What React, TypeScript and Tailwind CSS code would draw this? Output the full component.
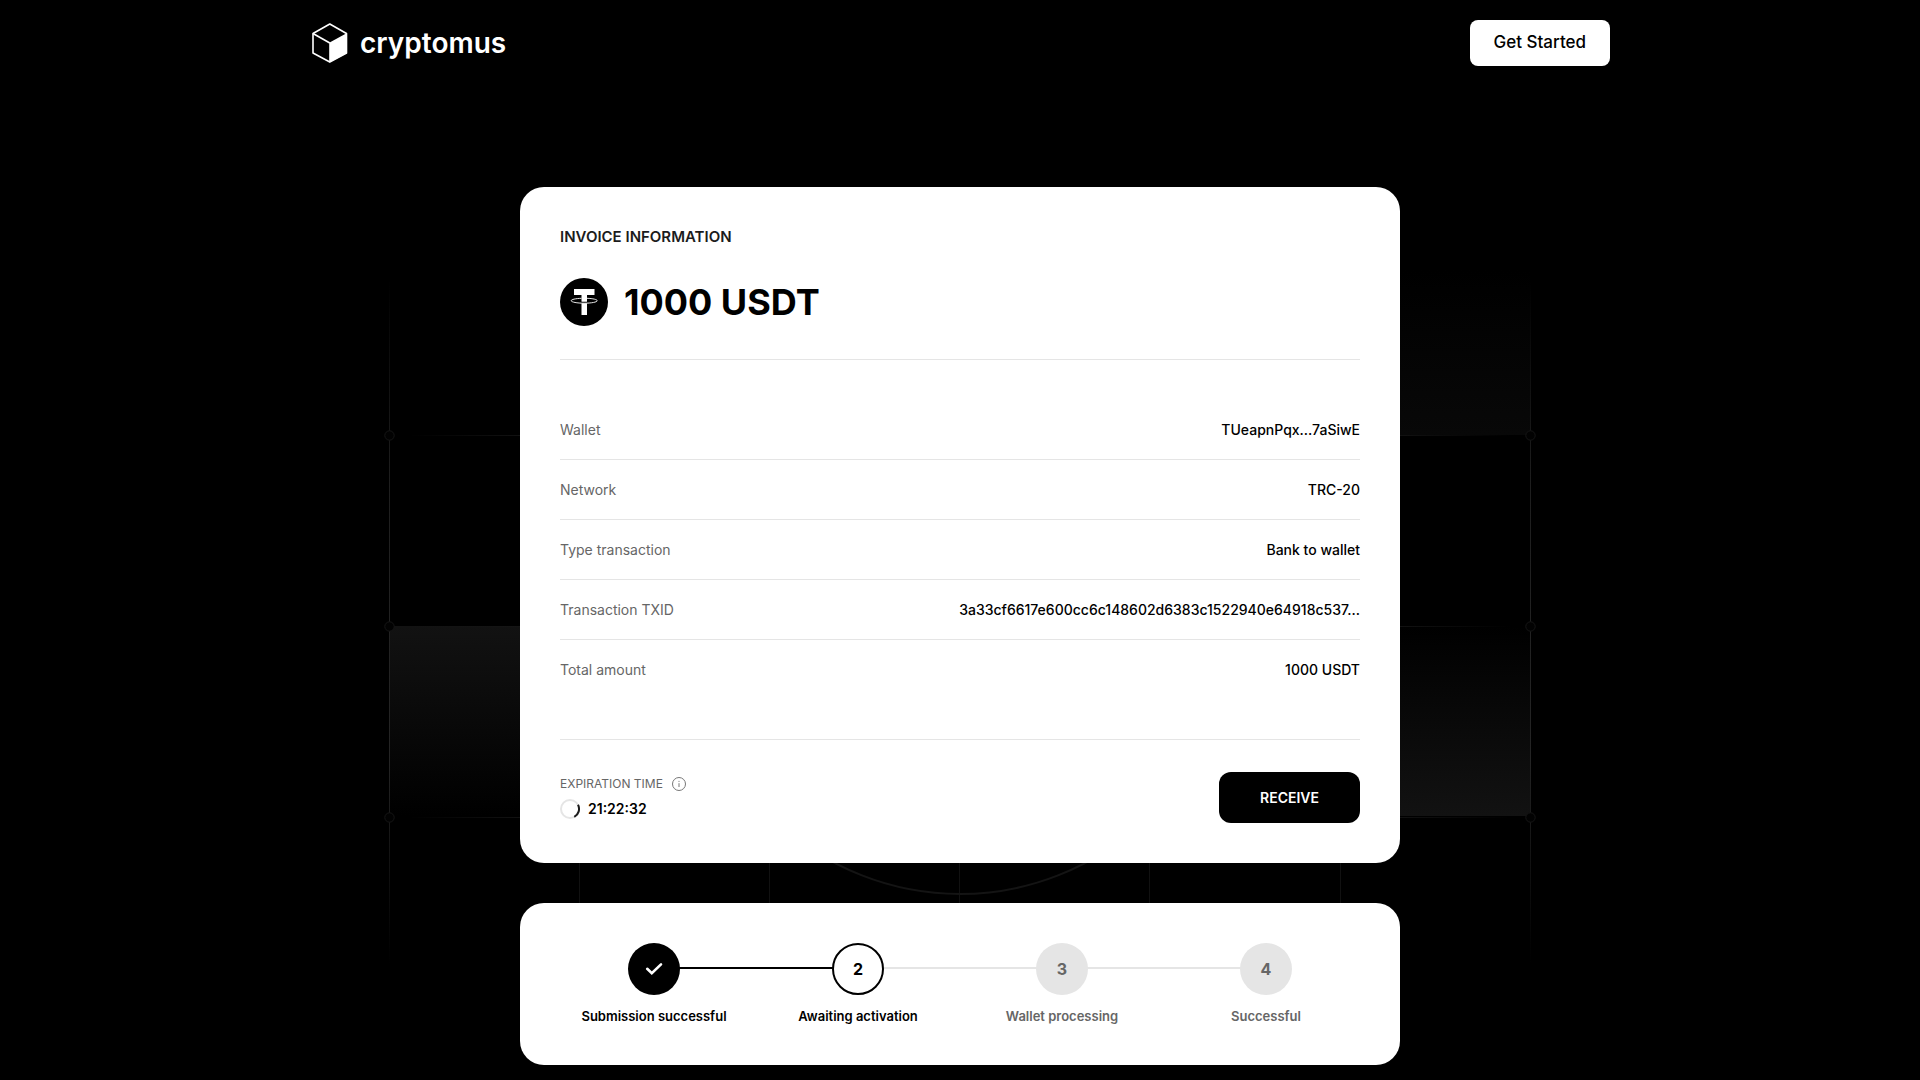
import type { ReactNode } from "react";
import { clsx } from "clsx";

type Step = {
  id: number;
  label: string;
  state: "done" | "active" | "pending";
};

const details = [
  { label: "Wallet", value: "TUeapnPqx...7aSiwE" },
  { label: "Network", value: "TRC-20" },
  { label: "Type transaction", value: "Bank to wallet" },
  {
    label: "Transaction TXID",
    value: "3a33cf6617e600cc6c148602d6383c1522940e64918c537…",
  },
  { label: "Total amount", value: "1000 USDT" },
];

const steps: Step[] = [
  { id: 1, label: "Submission successful", state: "done" },
  { id: 2, label: "Awaiting activation", state: "active" },
  { id: 3, label: "Wallet processing", state: "pending" },
  { id: 4, label: "Successful", state: "pending" },
];

const columns = [190, 380, 570, 760, 951];
const nodeRows = [165, 356, 547];

// Dim grid with glowing cells behind the cards
const GridBackdrop = () => (
  <svg
    className="absolute left-1/2 top-[270px] w-[1156px] h-[700px] -translate-x-1/2 pointer-events-none"
    viewBox="-7 0 1156 700"
    fill="none"
    aria-hidden="true"
  >
    <defs>
      <linearGradient id="edge" x1="0" y1="10" x2="0" y2="695" gradientUnits="userSpaceOnUse">
        <stop offset="0" stopColor="#222" stopOpacity="0" />
        <stop offset="0.3" stopColor="#1e1e1e" />
        <stop offset="0.7" stopColor="#242424" />
        <stop offset="1" stopColor="#222" stopOpacity="0" />
      </linearGradient>
      <linearGradient id="rule" x1="20" y1="0" x2="1122" y2="0" gradientUnits="userSpaceOnUse">
        <stop offset="0" stopColor="#151515" stopOpacity="0" />
        <stop offset="0.12" stopColor="#151515" />
        <stop offset="0.88" stopColor="#151515" />
        <stop offset="1" stopColor="#151515" stopOpacity="0" />
      </linearGradient>
      <linearGradient id="fadeDown" x1="0" y1="0" x2="0" y2="1">
        <stop offset="0" stopColor="#121212" />
        <stop offset="1" stopColor="#000" />
      </linearGradient>
      <linearGradient id="fadeUp" x1="0" y1="0" x2="0" y2="1">
        <stop offset="0" stopColor="#000" />
        <stop offset="1" stopColor="#121212" />
      </linearGradient>
      <linearGradient id="fadeUpSoft" x1="0" y1="0" x2="0" y2="1">
        <stop offset="0" stopColor="#000" />
        <stop offset="1" stopColor="#080808" />
      </linearGradient>
    </defs>
    <rect x="0" y="356" width="190" height="190" fill="url(#fadeDown)" />
    <rect x="951" y="356" width="190" height="190" fill="url(#fadeUp)" />
    <rect x="951" y="0" width="190" height="165" fill="url(#fadeUpSoft)" />
    {nodeRows.map((y) => (
      <rect key={y} x="20" y={y} width="1102" height="1" fill="url(#rule)" />
    ))}
    {columns.map((x) => (
      <rect key={x} x={x} y="10" width="1" height="680" fill="#111" />
    ))}
    <rect x="0" y="10" width="1" height="685" fill="url(#edge)" />
    <rect x="1141" y="10" width="1" height="685" fill="url(#edge)" />
    <circle cx="571" cy="356" r="268" stroke="#141414" strokeWidth="2" />
    {nodeRows.map((y) => (
      <g key={y} fill="#020202" stroke="#161616">
        <circle cx="0.5" cy={y + 0.5} r="4.700" />
        <circle cx="1141.5" cy={y + 0.5} r="4.700" />
      </g>
    ))}
  </svg>
);

const Logo = () => (
  <a href="#" className="flex items-center gap-3 pl-0.5 text-white">
    <svg className="w-9 h-10" viewBox="0 0 36 40" fill="none" aria-hidden="true">
      <path
        d="M17.8 1 34.5 10.5V30L17.8 39 1 30V10.5L17.8 1Z"
        stroke="currentColor"
        strokeWidth="1.6"
        strokeLinejoin="round"
      />
      <path d="M1 10.5 17.8 20" stroke="currentColor" strokeWidth="1.6" />
      <path d="M17.2 19.8 35 10V30.2L17.2 39.5V19.8Z" fill="currentColor" />
    </svg>
    <span className="text-[28px] leading-8 font-semibold">cryptomus</span>
  </a>
);

const TetherIcon = () => (
  <svg className="w-12 h-12" viewBox="0 0 48 48" fill="none" aria-hidden="true">
    <circle cx="24" cy="24" r="24" fill="#000" />
    <path d="M14 11H34.500V17H27V37H21.500V17H14V11Z" fill="#fff" />
    <path d="M20 24.200C22.500 24.600 26 24.600 28.500 24.200" stroke="#000" strokeWidth="1.400" />
    <path
      d="M21.500 20.300C15.500 20.500 11.200 21.500 11.200 22.700C11.200 24.100 17 25.200 24.200 25.200C31.400 25.200 37.200 24.100 37.200 22.700C37.200 21.500 33 20.500 27 20.300"
      stroke="#fff"
      strokeWidth="0.900"
    />
  </svg>
);

const InfoIcon = () => (
  <svg className="w-4 h-4" viewBox="0 0 16 16" fill="none" aria-hidden="true">
    <circle cx="8" cy="8" r="6.500" stroke="#777" />
    <path d="M8 7.200V11" stroke="#777" />
    <circle cx="8" cy="5.300" r="0.600" fill="#777" />
  </svg>
);

const Spinner = () => (
  <svg className="w-5 h-5" viewBox="0 0 20 20" fill="none" aria-hidden="true">
    <circle cx="10" cy="10" r="9" stroke="#e5e5e5" strokeWidth="2" />
    <path d="M18 5.800A9 9 0 0 1 14.300 17.900" stroke="#1c1c1c" strokeWidth="2" />
  </svg>
);

const CheckIcon = () => (
  <svg className="w-5 h-5" viewBox="0 0 20 20" fill="none" aria-hidden="true">
    <path
      d="M3.200 9.800 7.800 14.200 17 5.400"
      stroke="#fff"
      strokeWidth="2.600"
      strokeLinecap="round"
    />
  </svg>
);

const Card = ({ children, className }: { children: ReactNode; className?: string }) => (
  <section className={clsx("w-full rounded-3xl bg-white", className)}>{children}</section>
);

const StepItem = ({ step, last }: { step: Step; last: boolean }) => (
  <li className="relative flex flex-1 flex-col items-center gap-3">
    {/* Connector to the next step */}
    {!last && (
      <span
        className={clsx(
          "absolute left-1/2 top-6 h-0.5 w-full",
          step.state === "done" ? "bg-black" : "bg-[#e5e5e5]"
        )}
      />
    )}
    <span
      className={clsx(
        "relative flex h-[52px] w-[52px] items-center justify-center rounded-full text-base font-bold",
        step.state === "done" && "bg-black text-white",
        step.state === "active" && "border-2 border-black bg-white text-black",
        step.state === "pending" && "bg-[#e5e5e5] text-[#666]"
      )}
    >
      {step.state === "done" ? <CheckIcon /> : step.id}
    </span>
    <span
      className={clsx(
        "text-[13px] leading-[18px] font-semibold whitespace-nowrap",
        step.state === "pending" ? "text-[#666]" : "text-black"
      )}
    >
      {step.label}
    </span>
  </li>
);

const App = () => {
  return (
    <div className="relative min-h-screen overflow-hidden bg-black pb-[15px] font-['Inter','Liberation_Sans',sans-serif]">
      <GridBackdrop />

      <header className="relative mx-auto flex max-w-[1300px] items-center justify-between py-5">
        <Logo />
        <button
          type="button"
          className="h-[46px] rounded-lg bg-white px-6 text-[17px] font-medium text-black"
        >
          Get Started
        </button>
      </header>

      <main className="relative mx-auto mt-[101px] flex max-w-[880px] flex-col gap-10">
        <Card className="p-10">
          <h2 className="text-[15px] leading-5 font-semibold text-[#1c1c1c] uppercase">
            Invoice information
          </h2>
          <div className="mt-[31px] flex items-center gap-4 border-b border-[#e5e5e5] pb-[33px]">
            <TetherIcon />
            <h1 className="text-4xl leading-[48px] font-bold text-black">1000 USDT</h1>
          </div>

          <dl className="border-b border-[#e5e5e5] py-10 text-sm leading-5">
            {details.map((item) => (
              <div
                key={item.label}
                className="flex h-[60px] items-center justify-between border-b border-[#e5e5e5] last:h-[59px] last:border-b-0"
              >
                <dt className="text-[#666]">{item.label}</dt>
                <dd className="font-medium whitespace-nowrap text-black">{item.value}</dd>
              </div>
            ))}
          </dl>

          <div className="flex items-center justify-between pt-8">
            <div>
              <div className="flex items-center gap-2 text-xs leading-4 text-[#666] uppercase">
                Expiration time
                <InfoIcon />
              </div>
              <div className="mt-[7px] flex items-center gap-2 text-sm leading-5 font-semibold text-black">
                <Spinner />
                21:22:32
              </div>
            </div>
            <button
              type="button"
              className="h-[51px] min-w-[141px] rounded-xl bg-black px-8 text-sm font-semibold text-white uppercase"
            >
              Receive
            </button>
          </div>
        </Card>

        <Card className="px-8 py-10">
          <ol className="flex">
            {steps.map((step, index) => (
              <StepItem key={step.id} step={step} last={index === steps.length - 1} />
            ))}
          </ol>
        </Card>
      </main>
    </div>
  );
};

export default App;
